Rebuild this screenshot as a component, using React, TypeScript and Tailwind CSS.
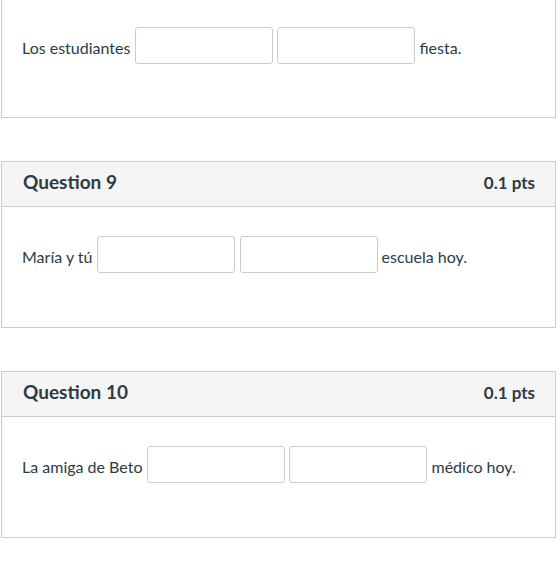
import React from "react";

function Blank() {
  return (
    <span className="block w-[138px] h-[37px] border border-[#c7cdd1] rounded-[3px] bg-white" />
  );
}

function Sentence({ before, after }: { before: string; after: string }) {
  return (
    <div className="flex items-start text-[16px] leading-[24px] text-[#2d3b45]">
      <span className="mt-[9px]">{before}</span>
      <span className="ml-[4.5px]"><Blank /></span>
      <span className="ml-[4.5px]"><Blank /></span>
      <span className="ml-[4px] mt-[9px]">{after}</span>
    </div>
  );
}

function Card({ title, before, after }: { title: string; before: string; after: string }) {
  return (
    <div className="border border-[#c7cdd1] bg-white">
      <div className="h-[45px] bg-[#f5f5f5] border-b border-[#c7cdd1] flex items-center justify-between pl-[21px] pr-[20px] pb-[3px]">
        <span className="text-[19px] font-bold text-[#2d3b45]">{title}</span>
        <span className="text-[17px] font-bold text-[#2d3b45]">0.1 pts</span>
      </div>
      <div className="h-[120px] pl-[20px] pt-[29px]">
        <Sentence before={before} after={after} />
      </div>
    </div>
  );
}

export default function App() {
  return (
    <div className="w-[560px] h-[564px] bg-white overflow-hidden" style={{ fontFamily: "Lato, 'Open Sans', sans-serif" }}>
      <div className="ml-[1px] w-[555px] -mt-[3px]">
        <div className="border border-t-0 border-[#c7cdd1] h-[121px] pl-[20px] pt-[30px]">
          <Sentence before="Los estudiantes" after="fiesta." />
        </div>
        <div className="mt-[43px]">
          <Card title="Question 9" before="María y tú" after="escuela hoy." />
        </div>
        <div className="mt-[43px]">
          <Card title="Question 10" before="La amiga de Beto" after="médico hoy." />
        </div>
      </div>
    </div>
  );
}
